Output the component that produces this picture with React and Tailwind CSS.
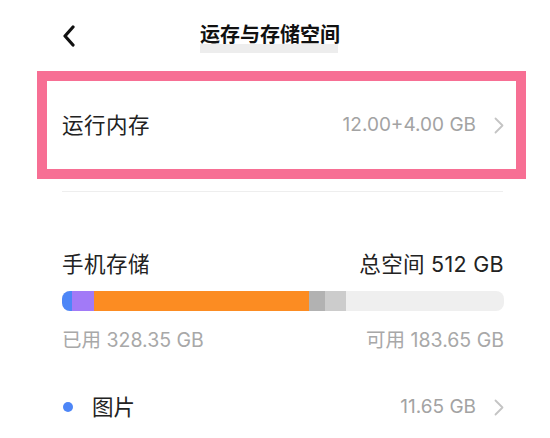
import React from 'react';

const font = { fontFamily: 'Inter, "Noto Sans CJK SC", sans-serif' };

function Chevron({ className = '' }) {
  return (
    <svg className={className} width="10" height="17" viewBox="0 0 10 17" fill="none">
      <path d="M1.5 1.5 L8.5 8.5 L1.5 15.5" stroke="currentColor" strokeWidth="1.8" strokeLinecap="round" strokeLinejoin="round" />
    </svg>
  );
}

export default function App() {
  return (
    <div className="w-[550px] h-[438px] bg-white overflow-hidden text-[#222]" style={font}>
      {/* header */}
      <div className="relative h-[71px] flex items-start">
        <div className="pl-[62px] pt-[25px]">
          <svg width="14" height="22" viewBox="0 0 14 22" fill="none">
            <path d="M11 2 L3 11 L11 20" stroke="#111" strokeWidth="3.2" strokeLinecap="round" strokeLinejoin="round" />
          </svg>
        </div>
        <div className="absolute left-[200px] top-[23px] w-[138px]">
          <div className="relative z-10 text-[20px] font-bold leading-[24px] text-[#111] whitespace-nowrap">运存与存储空间</div>
          <div className="-mt-[3px] h-[9px] bg-[#ededed]" />
        </div>
      </div>

      {/* highlighted memory row */}
      <div className="mx-[37px] w-[489px] h-[108px] border-[10px] border-[#f76f94] flex items-center pl-[15px] pr-[12px]">
        <span className="text-[21.5px] text-[#222] tracking-[0.5px]">运行内存</span>
        <span className="ml-auto text-[19px] text-[#a3a3a3]">12.00+4.00 GB</span>
        <Chevron className="ml-[18px] text-[#c4c4c4]" />
      </div>

      <div className="ml-[62px] w-[441px] mt-[12px] h-[1px] bg-[#eeeeee]" />

      {/* phone storage */}
      <div className="pl-[62px] pt-[59px] pr-[46px]">
        <div className="flex items-center justify-between h-[26px]">
          <span className="text-[21.5px] tracking-[0.5px]">手机存储</span>
          <span className="text-[21.5px] tracking-[0.3px]">总空间 512 GB</span>
        </div>
        <div className="mt-[14px] h-[20px] rounded-[8px] overflow-hidden flex bg-[#efefef]">
          <div className="w-[10px] bg-[#4d86f7]" />
          <div className="w-[22px] bg-[#a27af7]" />
          <div className="w-[215px] bg-[#fc8c22]" />
          <div className="w-[16px] bg-[#b2b2b2]" />
          <div className="w-[21px] bg-[#cccccc]" />
        </div>
        <div className="mt-[15px] flex items-center justify-between text-[19.5px] leading-[28px] text-[#a8a8a8]">
          <span>已用 328.35 GB</span>
          <span>可用 183.65 GB</span>
        </div>
      </div>

      {/* pictures row */}
      <div className="mt-[38px] pl-[63px] pr-[46px] flex items-center h-[30px]">
        <span className="w-[10px] h-[10px] rounded-full bg-[#4d86f7]" />
        <span className="ml-[19px] text-[21.5px]">图片</span>
        <span className="ml-auto text-[19px] text-[#a3a3a3]">11.65 GB</span>
        <Chevron className="ml-[18px] text-[#c4c4c4]" />
      </div>
    </div>
  );
}
